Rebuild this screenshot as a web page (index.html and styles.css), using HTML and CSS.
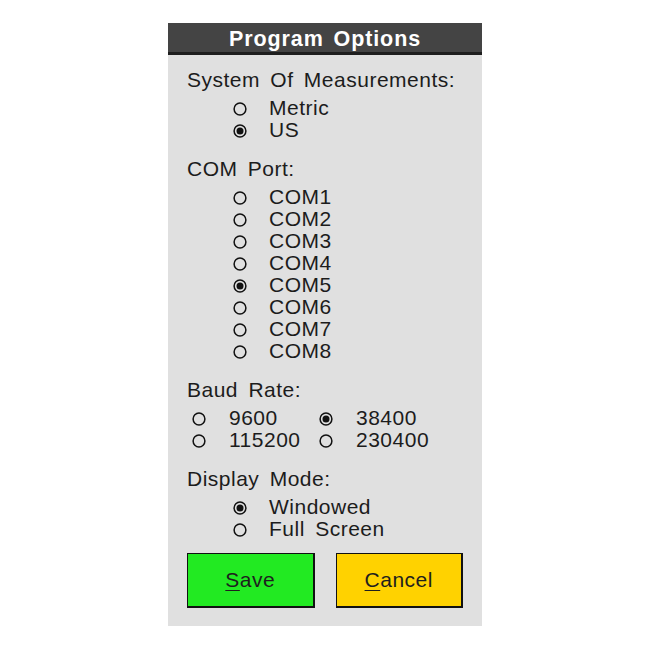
FILE: index.html
```html
<!DOCTYPE html>
<html>
<head>
<meta charset="utf-8">
<link rel="stylesheet" href="styles.css">
</head>
<body>
<div class="panel">
  <div class="hdr">Program Options</div>
  <div class="content">
    <div class="sec">
      <div class="head">System Of Measurements:</div>
      <div class="list">
        <div class="opt"><svg class="radio" viewBox="0 0 14 14"><circle cx="7" cy="7" r="5.9"/></svg><span>Metric</span></div>
        <div class="opt"><svg class="radio" viewBox="0 0 14 14"><circle cx="7" cy="7" r="5.9"/><circle class="dot" cx="7" cy="7" r="3.5"/></svg><span>US</span></div>
      </div>
    </div>
    <div class="sec">
      <div class="head">COM Port:</div>
      <div class="list">
        <div class="opt"><svg class="radio" viewBox="0 0 14 14"><circle cx="7" cy="7" r="5.9"/></svg><span>COM1</span></div>
        <div class="opt"><svg class="radio" viewBox="0 0 14 14"><circle cx="7" cy="7" r="5.9"/></svg><span>COM2</span></div>
        <div class="opt"><svg class="radio" viewBox="0 0 14 14"><circle cx="7" cy="7" r="5.9"/></svg><span>COM3</span></div>
        <div class="opt"><svg class="radio" viewBox="0 0 14 14"><circle cx="7" cy="7" r="5.9"/></svg><span>COM4</span></div>
        <div class="opt"><svg class="radio" viewBox="0 0 14 14"><circle cx="7" cy="7" r="5.9"/><circle class="dot" cx="7" cy="7" r="3.5"/></svg><span>COM5</span></div>
        <div class="opt"><svg class="radio" viewBox="0 0 14 14"><circle cx="7" cy="7" r="5.9"/></svg><span>COM6</span></div>
        <div class="opt"><svg class="radio" viewBox="0 0 14 14"><circle cx="7" cy="7" r="5.9"/></svg><span>COM7</span></div>
        <div class="opt"><svg class="radio" viewBox="0 0 14 14"><circle cx="7" cy="7" r="5.9"/></svg><span>COM8</span></div>
      </div>
    </div>
    <div class="sec">
      <div class="head">Baud Rate:</div>
      <div class="grid">
        <div class="opt"><svg class="radio" viewBox="0 0 14 14"><circle cx="7" cy="7" r="5.9"/></svg><span>9600</span></div>
        <div class="opt"><svg class="radio" viewBox="0 0 14 14"><circle cx="7" cy="7" r="5.9"/><circle class="dot" cx="7" cy="7" r="3.5"/></svg><span>38400</span></div>
        <div class="opt"><svg class="radio" viewBox="0 0 14 14"><circle cx="7" cy="7" r="5.9"/></svg><span>115200</span></div>
        <div class="opt"><svg class="radio" viewBox="0 0 14 14"><circle cx="7" cy="7" r="5.9"/></svg><span>230400</span></div>
      </div>
    </div>
    <div class="sec">
      <div class="head">Display Mode:</div>
      <div class="list">
        <div class="opt"><svg class="radio" viewBox="0 0 14 14"><circle cx="7" cy="7" r="5.9"/><circle class="dot" cx="7" cy="7" r="3.5"/></svg><span>Windowed</span></div>
        <div class="opt"><svg class="radio" viewBox="0 0 14 14"><circle cx="7" cy="7" r="5.9"/></svg><span>Full Screen</span></div>
      </div>
    </div>
    <div class="buttons">
      <div class="btn save"><u>S</u>ave</div>
      <div class="btn cancel"><u>C</u>ancel</div>
    </div>
  </div>
</div>
</body>
</html>
```
FILE: styles.css
```css
html, body {
  margin: 0;
  padding: 0;
  background: #ffffff;
}
body {
  padding-top: 23px;
  font-family: "Liberation Sans", Arial, sans-serif;
  color: #1c1c1c;
}
.panel {
  width: 314px;
  height: 603px;
  margin: 0 auto;
  background: #e0e0e0;
}
.hdr {
  height: 29px;
  line-height: 32px;
  background: #444444;
  border-bottom: 3px solid #1e1e1e;
  color: #ffffff;
  font-weight: bold;
  font-size: 21.5px;
  letter-spacing: 0.9px;
  word-spacing: 3px;
  text-align: center;
}
.content {
  padding: 14px 19px 0 19px;
  font-size: 21px;
  letter-spacing: 0.5px;
  word-spacing: 4px;
}
.sec + .sec {
  margin-top: 17px;
}
.head {
  line-height: 22px;
  height: 22px;
  margin-bottom: 6px;
  white-space: nowrap;
}
.list {
  display: flex;
  flex-direction: column;
  padding-left: 46px;
}
.opt {
  display: flex;
  align-items: center;
  gap: 22px;
  height: 22px;
  line-height: 22px;
  white-space: nowrap;
}
.radio {
  width: 14px;
  height: 14px;
  flex: none;
  margin-top: 1px;
}
.radio circle {
  fill: none;
  stroke: #111111;
  stroke-width: 1.5;
}
.radio circle.dot {
  fill: #111111;
  stroke: none;
}
.grid {
  display: grid;
  grid-template-columns: 127px auto;
  padding-left: 5px;
}
.grid .opt {
  gap: 23px;
}
.buttons {
  display: flex;
  gap: 21px;
  margin-top: 13px;
}
.btn {
  width: 126px;
  height: 52px;
  border-style: solid;
  border-color: #111111;
  border-width: 1px 2px 2px 1px;
  display: flex;
  align-items: center;
  justify-content: center;
  font-size: 21px;
  color: #1e1e1e;
  letter-spacing: 0.5px;
}
.btn u {
  text-decoration-thickness: 1px;
  text-underline-offset: 3px;
}
.save {
  background: #22ea22;
}
.cancel {
  background: #ffd200;
}
```
